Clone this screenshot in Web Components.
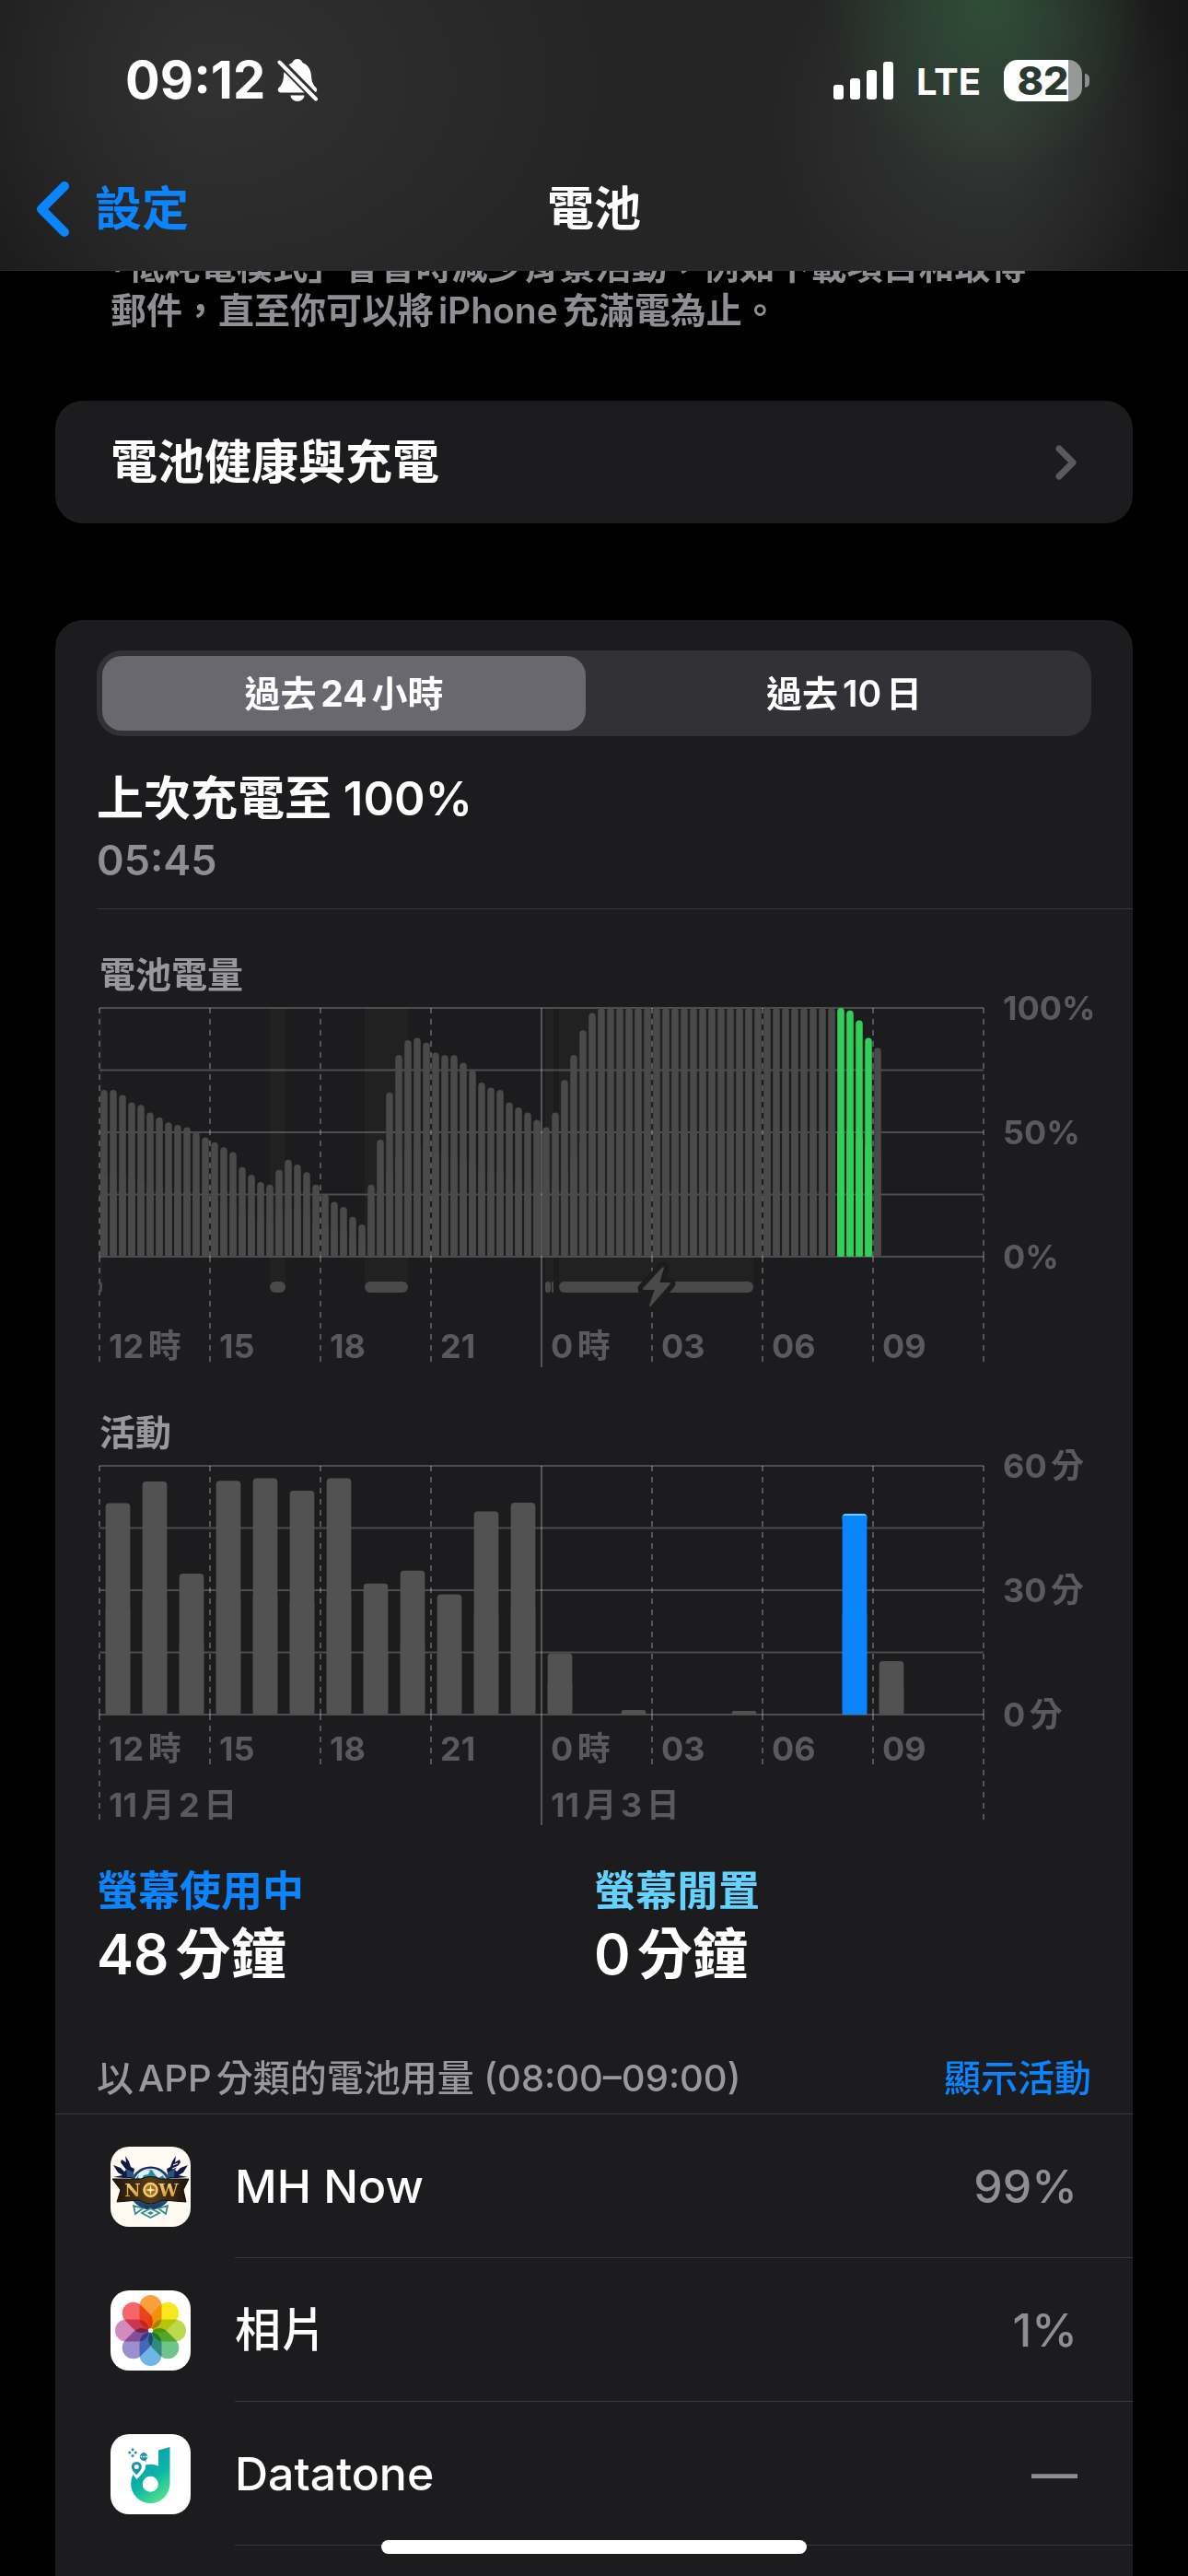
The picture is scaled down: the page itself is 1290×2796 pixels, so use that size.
<!DOCTYPE html>
<html lang="zh-Hant">
<head>
<meta charset="utf-8">
<meta name="viewport" content="width=device-width, initial-scale=1">
<title>電池</title>
<style>
  html, body { margin: 0; height: 100%; background: #000; }
  body {
    font-family: Inter, "Noto Sans CJK TC", sans-serif;
    font-weight: 600;
    color: #fff;
    text-autospace: normal;
    overflow: hidden;
    --card: #1c1c1e;
    --line: #38383a;
    --blue: #0a84ff;
    --cyan: #64d2ff;
    --green: #30d158;
    --muted: #8e8e93;
    --axis: #5a5a5e;
  }
</style>
</head>
<body>
<battery-screen></battery-screen>

<script>
const define = (name, html, setup) => {
  const template = document.createElement('template');
  template.innerHTML = html;
  customElements.define(name, class extends HTMLElement {
    connectedCallback() {
      if (this.shadowRoot) return;
      this.attachShadow({ mode: 'open' }).append(template.content.cloneNode(true));
      if (setup) setup(this, this.shadowRoot);
    }
  });
};

/* ---------- status bar ---------- */
define('status-bar', `
<style>
  :host { display: flex; justify-content: space-between; align-items: center; height: 148px; padding: 13px 107px 0 136px; }
  .left, .right { display: flex; align-items: center; }
  .left { gap: 13px; }
  .time { font-size: 56px; line-height: 60px; font-weight: 650; }
  .net { font-size: 40px; line-height: 48px; font-weight: 650; margin: 3px 25px 0 24px; }
  .battery { display: flex; align-items: center; gap: 3px; }
  .cell { width: 85px; height: 45px; border-radius: 15px; display: grid; place-items: center;
    background: linear-gradient(90deg, #fff 82%, #969997 82%); color: #2b3a30;
    font-size: 43px; line-height: 45px; font-weight: 800; }
  .nub { width: 5px; height: 15px; border-radius: 0 5px 5px 0; background: #8b8f8c; }
  svg { display: block; }
</style>
<div class="left">
  <span class="time">09:12</span>
  <svg width="44" height="46" viewBox="0 0 44 46" fill="#fff" aria-hidden="true">
    <mask id="cut"><rect width="44" height="46" fill="#fff"/><path d="M-2 -2L46 47" stroke="#000" stroke-width="9"/></mask>
    <g mask="url(#cut)">
      <path d="M22 0C25 0 27 2 27.500 4C33 6 36.500 11 37 18C37.300 25 39 28 42.500 31.500C44 33.500 43 36.500 40 36.500H4C1 36.500 0 33.500 1.500 31.500C5 28 6.700 25 7 18C7.500 11 11 6 16.500 4C17 2 19 0 22 0Z"/>
      <path d="M14.500 39.500H29.500C29.500 43 26 46 22 46S14.500 43 14.500 39.500Z"/>
    </g>
    <path d="M2.500 3.500L42 43.500" stroke="#fff" stroke-width="4" stroke-linecap="round"/>
  </svg>
</div>
<div class="right">
  <svg width="66" height="41" viewBox="0 0 66 41" fill="#fff" aria-hidden="true">
    <rect y="25" width="11" height="16" rx="3"/><rect x="18" y="18" width="11" height="23" rx="3"/>
    <rect x="36" y="9" width="11" height="32" rx="3"/><rect x="54" width="11" height="41" rx="3"/>
  </svg>
  <span class="net">LTE</span>
  <span class="battery"><span class="cell">82</span><span class="nub"></span></span>
</div>`);

/* ---------- navigation bar ---------- */
define('nav-bar', `
<style>
  :host { display: grid; grid-template-columns: 1fr auto 1fr; align-items: center; height: 132px; padding: 0 38px;
    font-size: 51px; line-height: 60px; }
  a { display: flex; align-items: center; gap: 27px; color: var(--blue); text-decoration: none; }
  h1 { margin: 0; font: inherit; font-weight: 600; }
  svg { display: block; }
</style>
<a href="#settings">
  <svg width="38" height="62" viewBox="0 0 38 62" fill="none" stroke="#0a84ff" stroke-width="10" stroke-linecap="round" stroke-linejoin="round" aria-hidden="true"><path d="M32 6L7 31L32 56"/></svg>
  <span><slot name="back"></slot></span>
</a>
<h1><slot></slot></h1>`);

/* ---------- grouped card ---------- */
define('list-card', `
<style>
  :host { display: block; margin: 0 60px; border-radius: 30px; background: var(--card); }
  :host([open-end]) { flex: 1; border-radius: 30px 30px 0 0; }
</style><slot></slot>`);

define('link-row', `
<style>
  :host { display: block; }
  a { display: flex; align-items: center; justify-content: space-between; height: 133px; padding: 0 60px;
    color: #fff; text-decoration: none; font-size: 51px; line-height: 60px; }
</style>
<a href="#health"><span><slot></slot></span>
  <svg width="26" height="38" viewBox="0 0 26 38" fill="none" stroke="#5a5a5e" stroke-width="7" stroke-linecap="round" stroke-linejoin="round" aria-hidden="true"><path d="M6 4L21 19L6 34"/></svg>
</a>`);

/* ---------- segmented control ---------- */
define('segmented-control', `
<style>
  :host { display: grid; grid-template-columns: 1fr 1fr; margin: 0 45px; padding: 6px; gap: 18px;
    border-radius: 27px; background: #313136; }
  button { height: 81px; border: 0; padding: 0; border-radius: 21px; background: none; color: #fff;
    font: inherit; font-size: 39px; line-height: 48px; text-autospace: inherit; }
  button[aria-pressed="true"] { background: #69686e; font-weight: 700; }
</style>
<button type="button" aria-pressed="true">過去24小時</button>
<button type="button" aria-pressed="false">過去10日</button>`);

/* ---------- last charge ---------- */
define('last-charge', `
<style>
  :host { display: flex; flex-direction: column; gap: 10px; margin-left: 45px; padding: 38px 0 25px; border-bottom: 1px solid var(--line); }
  .title { font-size: 51px; line-height: 60px; }
  .time { font-size: 45px; line-height: 54px; color: var(--muted); }
</style>
<span class="title"><slot></slot></span>
<span class="time"><slot name="time"></slot></span>`);

/* ---------- charts ---------- */
const chartStyle = `
<style>
  :host { display: grid; grid-template-columns: minmax(0, 1fr) 162px; padding-left: 48px; }
  h2 { grid-column: 1 / -1; margin: 0 0 12px; font-size: 39px; line-height: 48px; font-weight: 600; color: #98989f; }
  .plot { display: grid; height: 390px; }
  .plot > * { grid-area: 1 / 1; }
  svg { width: 100%; height: 390px; overflow: visible; }
  .labels { align-self: end; display: grid; grid-template-columns: repeat(8, minmax(0, 1fr)); row-gap: 25px; }
  .labels span, .scale span { font-size: 36px; line-height: 36px; font-weight: 650; color: var(--axis); white-space: nowrap; }
  .labels span { padding-left: 10px; }
  .labels .day { grid-column: span 4; }
  .scale { display: flex; flex-direction: column; justify-content: space-between; height: 306px; margin-top: -18px; padding-left: 21px; }
</style>`;
const hours = ['12時', '15', '18', '21', '0時', '03', '06', '09'];

/* The dash pattern starts anew below the base line of the plot. */
const gridLines = (dashEnd, outerEnd) => {
  const line = (x, y1, y2, dash) =>
    `<line x1="${x}%" x2="${x}%" y1="${y1}" y2="${y2}" stroke="#fff" stroke-opacity=".25" stroke-width="2"${dash ? ' stroke-dasharray="6 6"' : ''}/>`;
  let out = '';
  [0, 1, 2, 3, 4].forEach(i => {
    const y = i * 270 / 4;
    out += `<line x1="0" x2="100%" y1="${y}" y2="${y}" stroke="#fff" stroke-opacity=".22" stroke-width="2"/>`;
  });
  for (let i = 0; i <= 8; i++) {
    const x = i * 12.5;
    out += i === 4 ? line(x, 0, 390, false)
      : line(x, 0, 270, true) + line(x, 270, i % 8 ? dashEnd : outerEnd, true);
  }
  return out;
};

/* Bars take a share of their slot, so that the plot follows the width of the card. */
const bars = (values, slots, share, max, radius, colour) => values.map((v, i) => {
  if (!v) return '';
  const slot = 100 / slots, h = v / max * 270;
  const x = i * slot + slot * (1 - share) / 2, w = slot * share;
  const r = Math.min(radius, h / 2);
  return `<rect x="${x}%" width="${w}%" y="${270 - h}" height="${h}" rx="${r}" fill="${colour(i)}"/>` +
    `<rect x="${x}%" width="${w}%" y="${270 - h / 2}" height="${h / 2}" fill="${colour(i)}"/>`;
}).join('');

define('level-chart', chartStyle + `
<h2><slot></slot></h2>
<div class="plot"><svg role="img" aria-label="電池電量"></svg>
<div class="labels" style="padding-bottom:5px">${hours.map(h => `<span>${h}</span>`).join('')}</div></div>
<div class="scale"><span>100%</span><span>50%</span><span>0%</span></div>`,
(host, root) => {
  const level = [67,67,65,62,61,58,56,54,53,52,50,48,46,44,42,36,33,30,29,35,39,37,34,29,25,22,20,16,13,29,47,66,81,87,88,86,
    82,81,81,78,75,70,68,67,62,60,58,55,52,58,71,81,91,98, ...Array(26).fill(100), 100,99,95,88,84];
  const pct = x => x / 960 * 100 + '%';
  const charge = [[185, 17], [288, 47], [484, 6], [491, 2], [499, 211]];
  const band = [[0, 3], [185, 17], [288, 47], [484, 9], [499, 211]];
  root.querySelector('svg').innerHTML =
    band.map(([x, w]) => `<rect x="${pct(x)}" width="${pct(w)}" y="0" height="303" fill="#212121"/>`).join('') +
    gridLines(384, 384) +
    bars(level, 96, .75, 100, 4, i => i >= 80 && i < 84 ? '#30d158' : '#4a4a4a') +
    `<path d="M0 297Q3 297 3 301V305Q3 309 0 309Z" fill="#4a4a4a"/>` +
    charge.map(([x, w]) => `<rect x="${pct(x)}" width="${pct(w)}" y="297" height="12" rx="${Math.min(6, w / 2)}" fill="#4a4a4a"/>`).join('') +
    `<svg x="${pct(604)}" y="299" width="1" height="1" overflow="visible" style="width:1px;height:1px">
      <path d="M8 -17L-13 6H0L-6 24L15 0H3Z" fill="#4a4a4a" stroke="#1c1c1e" stroke-width="13" stroke-linejoin="round"/>
      <path d="M8 -17L-13 6H0L-6 24L15 0H3Z" fill="#4a4a4a" stroke="#4a4a4a" stroke-width="2" stroke-linejoin="round"/></svg>`;
});

define('activity-chart', chartStyle + `
<h2><slot></slot></h2>
<div class="plot"><svg role="img" aria-label="活動"></svg>
<div class="labels" style="padding-bottom:4px">${hours.map(h => `<span>${h}</span>`).join('')}<span class="day">11月2日</span><span class="day">11月3日</span></div></div>
<div class="scale"><span>60分</span><span>30分</span><span>0分</span></div>`,
(host, root) => {
  const minutes = [51,56.2,34,56.4,57,54,57,31.6,34.7,29,49,51.1,14.8,0,1.1,0,0,.9,0,0,48.4,12.9];
  root.querySelector('svg').innerHTML = gridLines(324, 384) +
    bars(minutes, 24, 2 / 3, 60, 4, i => i === 20 ? '#0a84ff' : '#525252') +
    `<rect x="${(20 + 1 / 6) / 24 * 100}%" width="${2 / 3 / 24 * 100}%" y="52" height="8" rx="4" fill="#64d2ff"/>` +
    `<rect x="${(20 + 1 / 6) / 24 * 100}%" width="${2 / 3 / 24 * 100}%" y="54" height="8" rx="2" fill="#0a84ff"/>`;
});

/* ---------- screen time summary ---------- */
define('usage-summary', `
<style>
  :host { display: grid; grid-template-columns: 1fr 1fr; margin: 0 45px; }
  div { display: flex; flex-direction: column; gap: 5px; }
  .label { font-size: 45px; line-height: 54px; }
  .value { font-size: 60px; line-height: 72px; }
</style>
<div><span class="label" style="color:var(--blue)">螢幕使用中</span><span class="value">48分鐘</span></div>
<div><span class="label" style="color:var(--cyan)">螢幕閒置</span><span class="value">0分鐘</span></div>`);

define('list-heading', `
<style>
  :host { display: flex; justify-content: space-between; padding: 0 45px 14px; border-bottom: 1px solid var(--line);
    font-size: 40px; line-height: 48px; font-weight: 500; color: #98989f; }
  button { border: 0; padding: 0; background: none; font: inherit; color: var(--blue); }
</style>
<span><slot></slot></span><button type="button"><slot name="action"></slot></button>`);

/* ---------- app icons ---------- */
const petals = ['#f9a03c', '#f7e81e', '#bcd94e', '#6ec48c', '#6fb5e8', '#9c8fce', '#d58abd', '#f4666a'];
const horn = 'M16 10L20 16L22 22L26 24L24 34H14L3 33L13 31L8 28L3 20L11 23L15 27L17 25L11 17L12 14L17 17Z';
const icons = {
  photos: `<rect width="87" height="87" fill="#fff"/><g transform="translate(43.500 43.500)" style="isolation:isolate">` +
    petals.map((c, i) => `<rect x="-12" y="-38.500" width="24" height="37" rx="12" fill="${c}" transform="rotate(${i * 45})" style="mix-blend-mode:multiply"/>`).join('') +
    `<circle r="2.500" fill="#fff"/></g>`,
  datatone: `<defs><linearGradient id="g" x1="24" y1="20" x2="62" y2="72" gradientUnits="userSpaceOnUse"><stop stop-color="#1296ab"/><stop offset=".55" stop-color="#0cb5a6"/><stop offset="1" stop-color="#5ee987"/></linearGradient></defs>
    <rect width="87" height="87" fill="#fff"/>
    <path fill="url(#g)" fill-rule="evenodd" d="M64.500 14V54A21.200 21.200 0 1 1 52 34.500V17.500ZM43.300 45.800A8.500 8.500 0 1 0 43.300 62.800A8.500 8.500 0 1 0 43.300 45.800Z"/>
    <path fill="#fff" d="M28.500 49C24 43 19 39 19 35A9.500 9.500 0 0 1 38 35C38 40 33 44 28.500 49Z"/>
    <path fill="#1a93a6" fill-rule="evenodd" d="M28.300 44.500C25 40.500 22.800 38.500 22.800 35.500A5.500 5.500 0 0 1 33.800 35.500C33.800 38.500 31.500 40.500 28.300 44.500ZM28.300 33A2.500 2.500 0 1 0 28.300 38A2.500 2.500 0 1 0 28.300 33Z"/>
    <path fill="#1a93a6" d="M36 20A4.700 4.500 0 1 0 37 29L38.500 30V28A4.700 4.500 0 0 0 36 20Z"/>
    <g fill="#fff"><circle cx="33.500" cy="24.500" r="1"/><circle cx="36.200" cy="24.500" r="1"/><circle cx="38.900" cy="24.500" r="1"/></g>
    <g fill="#1a93a6"><circle cx="24" cy="16.800" r="1.500"/><circle cx="24" cy="23.400" r="1.500"/><circle cx="20.700" cy="20.100" r="1.500"/><circle cx="27.300" cy="20.100" r="1.500"/></g>`,
  mhnow: `<defs><linearGradient id="w" y2="1" x2="0"><stop stop-color="#16255c"/><stop offset=".5" stop-color="#2a7c96"/><stop offset="1" stop-color="#173563"/></linearGradient>
    <linearGradient id="o" y2="1" x2="0"><stop stop-color="#f9dd83"/><stop offset="1" stop-color="#d0912e"/></linearGradient>
    <linearGradient id="k"><stop stop-color="#1d140c"/><stop offset=".5" stop-color="#5a3d18"/><stop offset="1" stop-color="#1d140c"/></linearGradient></defs>
    <rect width="87" height="87" fill="#fffaf2"/>
    <g fill="#101a44"><path d="${horn}"/><path d="M17 24L25 28L24 33H18Z" fill="#27547c"/></g>
    <g transform="matrix(-1 0 0 1 87 0)" fill="#101a44"><path d="${horn}"/><path d="M14 18L19 20M13 21L20 24" stroke="#fffaf2" stroke-width="1.200"/><path d="M17 24L25 28L24 33H18Z" fill="#27547c"/></g>
    <circle cx="43.500" cy="45" r="23.500" fill="url(#w)"/>
    <circle cx="43.500" cy="43" r="18.500" fill="#2c87a0" stroke="#dce9ea" stroke-width="1.500"/>
    <path d="M31 29L37 25L43 26L41 30L36 31L34 35L30 34ZM45 25L51 26L57 31L52 34L48 30Z" fill="#e4f0ee"/>
    <path d="M2 35H33Q43.500 30 54 35H85L79 47L82 60L56 58Q43.500 66 31 58L7 60L11 47Z" fill="url(#k)" stroke="#140e08"/>
    <g fill="#fffaf2" stroke="#2f8e8b" stroke-width="1.800"><path d="M25 64L35 67L27 73ZM62 64L52 67L60 73ZM43.500 67L53 72L43.500 77L34 72Z"/></g><path d="M43.500 70L47 72L43.500 74L40 72Z" fill="#2f8e8b"/>
    <g font-family="DejaVu Serif, serif" font-weight="700" font-size="19" text-anchor="middle" fill="url(#o)">
      <text x="24" y="54">N</text><text x="43" y="54">O</text><text x="63" y="54">W</text></g>
    <circle cx="43.500" cy="47" r="7" fill="#a86f22" stroke="#f3cc6b" stroke-width="2.500"/>
    <path d="M43.500 41L44.500 46L49.500 47L44.500 48L43.500 53L42.500 48L37.500 47L42.500 46Z" fill="#fff2b8"/>`
};

define('app-row', `
<style>
  :host { display: flex; align-items: center; height: 156px; padding-left: 60px; gap: 48px; font-size: 50px; line-height: 60px; }
  .icon { width: 87px; height: 87px; border-radius: 20px; overflow: hidden; flex: none; }
  .icon svg { display: block; }
  .body { flex: 1; height: 155px; display: flex; align-items: center; justify-content: space-between; padding-right: 60px; border-bottom: 1px solid var(--line); }
  .value { color: var(--muted); font-weight: 550; }
  .name { font-weight: 550; }
</style>
<span class="icon"></span>
<span class="body"><span class="name"><slot></slot></span><span class="value"><slot name="value"></slot></span></span>`,
(host, root) => {
  root.querySelector('.icon').innerHTML = `<svg width="87" height="87" viewBox="0 0 87 87" aria-hidden="true">${icons[host.getAttribute('icon')]}</svg>`;
});

/* ---------- screen ---------- */
define('battery-screen', `
<style>
  :host { display: flex; flex-direction: column; height: 100%; overflow: hidden; }
  header { position: fixed; inset: 0 0 auto 0; z-index: 1; border-bottom: 1px solid #2c2c2c;
    background:
      radial-gradient(ellipse 180px 190px at 83% 0, rgba(48, 92, 60, .7), rgba(48, 92, 60, 0)),
      radial-gradient(ellipse 230px 220px at 83% 46%, rgba(60, 66, 62, .6), rgba(60, 66, 62, 0)),
      radial-gradient(ellipse 420px 300px at 18% 30%, rgba(56, 56, 56, .65), rgba(56, 56, 56, 0)),
      linear-gradient(90deg, #191919, #252525 16%, #252525 85%, #171717); }
  main { display: flex; flex-direction: column; flex: 1; padding-top: 265px; }
  p { margin: 0 160px 74px 120px; font-size: 39px; line-height: 48px; color: var(--muted); text-spacing-trim: trim-start; }
  list-card + list-card { margin-top: 105px; padding-top: 33px; }
  level-chart, activity-chart { margin-top: 47px; }
  usage-summary { margin-top: 45px; }
  list-heading { margin-top: 75px; }
  .home { position: fixed; left: 0; right: 0; bottom: 24px; z-index: 1; width: 462px; height: 15px; margin: 0 auto; border-radius: 8px; background: #fff; }
</style>
<header>
  <status-bar></status-bar>
  <nav-bar><span slot="back">設定</span>電池</nav-bar>
</header>
<main>
  <p>「低耗電模式」會暫時減少背景活動，例如下載項目和取得郵件，直至你可以將iPhone充滿電為止。</p>
  <list-card><link-row>電池健康與充電</link-row></list-card>
  <list-card open-end>
    <segmented-control></segmented-control>
    <last-charge>上次充電至 100%<span slot="time">05:45</span></last-charge>
    <level-chart>電池電量</level-chart>
    <activity-chart>活動</activity-chart>
    <usage-summary></usage-summary>
    <list-heading>以APP分類的電池用量 (08:00–09:00)<span slot="action">顯示活動</span></list-heading>
    <app-row icon="mhnow">MH Now<span slot="value">99%</span></app-row>
    <app-row icon="photos">相片<span slot="value">1%</span></app-row>
    <app-row icon="datatone">Datatone<span slot="value">—</span></app-row>
  </list-card>
</main>
<div class="home"></div>`);
</script>
</body>
</html>
